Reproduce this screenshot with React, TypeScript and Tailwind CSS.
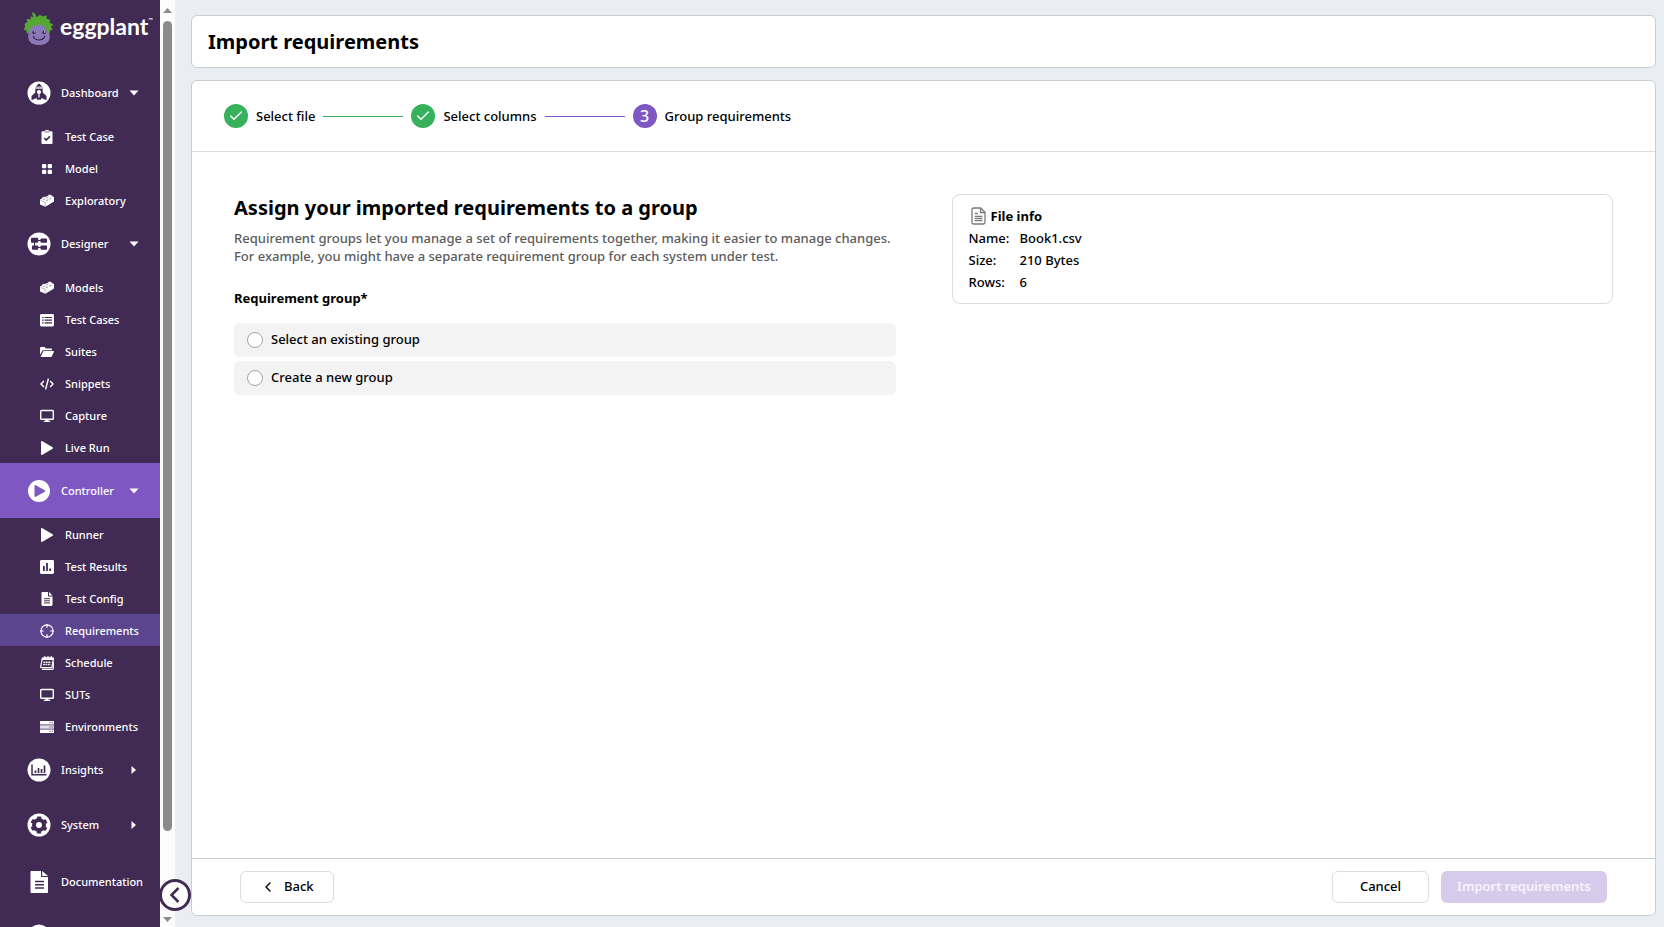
import React, { useState } from 'react';
import { Check, ChevronLeft } from 'lucide-react';

/* ---------- 14px icons of the sub menu ---------- */

const ClipboardIcon = () => (
  <svg width="14" height="14" viewBox="0 0 14 14">
    <path fill="#fff" d="M2.6 1.2H4.9V.9c0-.5.4-.9.9-.9h2.4c.5 0 .9.4.9.9v.3h2.3c.6 0 1.1.5 1.1 1.1v10.6c0 .6-.5 1.1-1.1 1.1H2.6c-.6 0-1.1-.5-1.1-1.1V2.3c0-.6.5-1.1 1.1-1.1z" />
    <path d="M4.9 1.9h4.2" stroke="#412b54" strokeWidth=".7" />
    <path d="M4.2 8l2 2 3.7-3.7" fill="none" stroke="#412b54" strokeWidth="1.7" />
  </svg>
);

const GridIcon = () => (
  <svg width="14" height="14" viewBox="0 0 14 14" fill="#fff">
    <rect x="2" y="2" width="4.3" height="4.3" rx="1" />
    <rect x="7.7" y="2" width="4.3" height="4.3" rx="1" />
    <rect x="2" y="7.7" width="4.3" height="4.3" rx="1" />
    <rect x="7.7" y="7.7" width="4.3" height="4.3" rx="1" />
  </svg>
);

const BrickIcon = () => (
  <svg width="14" height="14" viewBox="0 0 14 14">
    <path fill="#fff" d="M0 5.4l2-1 .2-.9 2-.8 1 .2 2.800-1.200.4-.6 1.800-.5L14 3.200v4.400L5.400 12.800 0 10.400z" />
    <path d="M.6 6.300l4.600 2v3.900" fill="none" stroke="#412b54" strokeWidth=".5" opacity=".7" />
    <path d="M3 5.700l2.200-1M6.400 4.100l2.200-1M6 6.700l2.200-1M9.400 5.100l2.200-1" stroke="#412b54" strokeWidth=".6" opacity=".8" />
  </svg>
);

const ListIcon = () => (
  <svg width="14" height="14" viewBox="0 0 14 14">
    <rect y="1" width="14" height="12.4" rx="1.4" fill="#fff" />
    <path d="M2 4.5h1.6M2 7.2h1.6M2 9.9h1.6M4.6 4.5H12M4.6 7.2H12M4.6 9.9H12" stroke="#412b54" strokeWidth="1.2" />
  </svg>
);

const FolderIcon = () => (
  <svg width="14" height="14" viewBox="0 0 14 14" fill="#fff">
    <path d="M0 9.8V3.2C0 2.5.5 2 1.2 2h3.4L6 3.4h4.8c.7 0 1.2.5 1.2 1.2v.7H3.7c-.7 0-1.3.4-1.6 1z" />
    <path d="M.6 12l2.4-5.2c.2-.5.6-.7 1.1-.7h9.4c.4 0 .6.4.4.8l-2.2 4.5c-.2.4-.6.6-1 .6z" />
  </svg>
);

const CodeIcon = () => (
  <svg width="14" height="14" viewBox="0 0 14 14" fill="none" stroke="#fff" strokeWidth="1.5">
    <path d="M3.9 4L1 7l2.9 3M10.1 4L13 7l-2.9 3M8.4 1.6L5.6 12.4" />
  </svg>
);

const MonitorIcon = () => (
  <svg width="14" height="14" viewBox="0 0 14 14">
    <rect x=".7" y="1.5" width="12.6" height="8.8" rx=".8" fill="none" stroke="#fff" strokeWidth="1.4" />
    <path d="M5.6 10.5h2.8v1.3h1.8V13H3.8v-1.2h1.8z" fill="#fff" />
  </svg>
);

const PlayIcon = () => (
  <svg width="14" height="14" viewBox="0 0 14 14">
    <path d="M1 .8c0-.6.5-.9 1-.7l10.6 6.2c.5.3.5 1.1 0 1.4L2 13.9c-.5.2-1-.1-1-.7z" fill="#fff" />
  </svg>
);

const BarsIcon = () => (
  <svg width="14" height="14" viewBox="0 0 14 14">
    <rect width="14" height="14" rx="1.4" fill="#fff" />
    <path d="M3 6h1.8v5H3zM6.1 3h1.8v8H6.1zM9.2 8.5H11V11H9.2z" fill="#412b54" />
  </svg>
);

const DocIcon = () => (
  <svg width="14" height="14" viewBox="0 0 14 14">
    <path d="M2.5 0H8v4.5h4.5v8.3c0 .7-.5 1.2-1.2 1.2H2.7c-.7 0-1.2-.5-1.2-1.2V1c0-.6.4-1 1-1z" fill="#fff" />
    <path d="M9 0l3.5 3.5H9z" fill="#fff" />
    <path d="M4 6.700h6M4 8.800h6M4 10.900h6" stroke="#412b54" strokeWidth="1" />
  </svg>
);

const TargetIcon = () => (
  <svg width="14" height="14" viewBox="0 0 14 14" fill="none" stroke="#fff">
    <circle cx="7" cy="7" r="6.1" strokeWidth="1.2" />
    <path d="M7 0v3.800M7 10.200V14M0 7h3.800M10.200 7H14" strokeWidth="1.200" />
  </svg>
);

const CalendarIcon = () => (
  <svg width="14" height="14" viewBox="0 0 14 14">
    <path d="M3.200 1.800h9.400c.5 0 .8.4.8.8L12 10.800c-.1.500-.5.800-1 .8H1.400c-.5 0-.8-.4-.7-.9l1.500-8.100c.1-.5.5-.8 1-.8z" fill="none" stroke="#fff" strokeWidth="1.200" />
    <path d="M2.300 2h11l-.4 2h-11z" fill="#fff" />
    <path d="M4.800 0v2.500M8 0v2.500M11.200 0v2.500" stroke="#fff" strokeWidth="1.200" />
    <path d="M3.500 6.300h7.600M3.100 8.600h7.600" stroke="#fff" strokeWidth="1.500" strokeDasharray="1.700 .7" />
    <path d="M2 13.300h10.200c.6 0 1.100-.5 1.100-1.100V6" fill="none" stroke="#fff" strokeWidth="1.200" />
  </svg>
);

const ServerIcon = () => (
  <svg width="14" height="14" viewBox="0 0 14 14">
    <rect y="1" width="14" height="3.4" rx=".5" fill="#fff" />
    <rect y="5.3" width="14" height="3.4" rx=".5" fill="#fff" opacity=".85" />
    <rect y="9.6" width="14" height="3.4" rx=".5" fill="#fff" />
    <path d="M9.500 2.700h1M11.800 2.700h1M9.500 7h1M11.800 7h1M9.500 11.300h1M11.800 11.300h1" stroke="#412b54" strokeWidth="1" />
  </svg>
);

/* ---------- round icons of the sections ---------- */

const RocketBadge = () => (
  <svg width="24" height="24" viewBox="0 0 24 24">
    <circle cx="12" cy="12" r="11.5" fill="#fff" />
    <path d="M12 2.500c2.300 1.600 3.600 3.600 3.700 6.200v2.800l3.800 3.600v4.200l-3.800-1.900H14v1.400h-4v-1.400H8.300l-3.800 1.900v-4.200l3.800-3.600V8.700c.1-2.600 1.400-4.600 3.700-6.200z" fill="#412b54" />
    <path d="M9.200 5.600h5.600L15.700 8H8.300z" fill="#bdb3c6" />
    <circle cx="12" cy="11" r="2.100" fill="#fff" />
    <path d="M12 12.500v4" stroke="#fff" strokeWidth="1.200" />
  </svg>
);

const DesignerBadge = () => (
  <svg width="24" height="24" viewBox="0 0 24 24">
    <circle cx="12" cy="12" r="11.5" fill="#fff" />
    <path d="M10 8.500h5M10 15.500h5M7.500 10v5" stroke="#412b54" strokeWidth="1.200" />
    <rect x="4" y="5.800" width="7.200" height="5" rx=".7" fill="#412b54" />
    <rect x="13.500" y="6.500" width="6.500" height="4.200" rx=".7" fill="#412b54" />
    <rect x="5" y="13.600" width="6.200" height="4.200" rx=".7" fill="#412b54" />
    <rect x="13.500" y="13.600" width="6.500" height="4.200" rx=".7" fill="#412b54" />
  </svg>
);

const ControllerBadge = () => (
  <svg width="24" height="24" viewBox="0 0 24 24">
    <circle cx="12" cy="12" r="11" fill="#fff" />
    <path d="M7.500 7c0-.7.700-1.100 1.300-.8l9 5.100c.5.300.5 1.100 0 1.400l-9 5.100c-.6.300-1.300-.1-1.300-.8z" fill="#7e57c2" />
  </svg>
);

const InsightsBadge = () => (
  <svg width="24" height="24" viewBox="0 0 24 24">
    <circle cx="12" cy="12" r="11.5" fill="#fff" />
    <path d="M5 6.500v10.200h14.500" fill="none" stroke="#412b54" strokeWidth="1.500" />
    <path d="M8.500 15v-2.500M11.500 15v-5M14.500 15v-4M17.500 15V7.500" stroke="#412b54" strokeWidth="1.700" />
  </svg>
);

const SystemBadge = () => (
  <svg width="24" height="24" viewBox="0 0 24 24">
    <circle cx="12" cy="12" r="11.5" fill="#fff" />
    <circle cx="12" cy="12" r="5" fill="none" stroke="#412b54" strokeWidth="4" />
    <circle cx="12" cy="12" r="7.300" fill="none" stroke="#412b54" strokeWidth="2.600" strokeDasharray="4 3.645" strokeDashoffset="2" transform="rotate(30 12 12)" />
  </svg>
);

const DocumentationIcon = () => (
  <svg width="24" height="24" viewBox="0 0 24 24">
    <path d="M4.500 1h9.500v6h7v15c0 .6-.4 1-1 1H4.500c-.6 0-1-.4-1-1V2c0-.6.4-1 1-1z" fill="#fff" />
    <path d="M15.200 1L21 6h-5.800z" fill="#fff" />
    <path d="M8 11.500h9M8 14.700h9M8 17.900h9" stroke="#412b54" strokeWidth="1.500" />
  </svg>
);

const PlainBadge = () => (
  <svg width="24" height="24" viewBox="0 0 24 24">
    <circle cx="12" cy="12" r="11.5" fill="#fff" />
  </svg>
);

const LogoMark = () => (
  <svg width="30" height="34" viewBox="0 0 30 34" className="shrink-0">
    <path d="M15 9c6.500 0 9.500 4 9.900 9 .2 3 1.100 5 .9 7.500-.5 5-4.700 7.500-10.800 7.500S4.700 30.500 4.200 25.500C4 23 4.900 21 5.100 18 5.500 13 8.500 9 15 9z" fill="#8b78b9" />
    <path d="M9.500 5.200L8 1.500 8.800 0l2.400 1.700 1.300 3.600 3.500-2.600 2.600 1.800 4.200-1.300-.3 3.600 3.900 1.200-1 2.700 3.900 1.800-2.300 2.200 1.500 3-2.500.9-.5 2.600-2.200-.4-2.100-6.300-3-.7-2.400-1.500-2.600 1.600-2.400-1.200-1.800 2-2.500.8-1.100 5.500-2.400.4-.8-2.800-2.500-1 1.500-2.600L.5 12l2.800-2-.8-3 4.400.2-.3-3z" fill="#56a632" />
    <circle cx="10" cy="20.500" r="1.700" fill="#35244a" />
    <circle cx="20" cy="20.500" r="1.700" fill="#35244a" />
    <circle cx="10.500" cy="19.900" r=".6" fill="#fff" />
    <circle cx="20.500" cy="19.900" r=".6" fill="#fff" />
    <path d="M9.300 24.500c1.300 2.500 3.300 3.500 5.700 3.500s4.500-1 5.700-3.500" fill="none" stroke="#35244a" strokeWidth="1.200" strokeLinecap="round" />
  </svg>
);

const FileIcon = () => (
  <svg width="16" height="18" viewBox="0 0 16 18" fill="none" stroke="#7a7a7a" strokeWidth="1.300">
    <path d="M2.700 1h7L14 5.300v10c0 .9-.7 1.700-1.700 1.700H2.700C1.800 17 1 16.200 1 15.300V2.700C1 1.800 1.800 1 2.700 1z" />
    <path d="M9.500 1v4.500H14M3.800 6.500h3M3.800 9.300h7.600M3.800 11.500h7.600M3.800 13.700h7.600" />
  </svg>
);

interface SubItem {
  label: string;
  icon: React.ComponentType;
  active?: boolean;
}

interface Section {
  label: string;
  icon: React.ComponentType;
  arrow?: 'down' | 'right';
  active?: boolean;
  tall?: boolean;
  items?: SubItem[];
}

const sections: Section[] = [
  {
    label: 'Dashboard',
    icon: RocketBadge,
    arrow: 'down',
    items: [
      { label: 'Test Case', icon: ClipboardIcon },
      { label: 'Model', icon: GridIcon },
      { label: 'Exploratory', icon: BrickIcon },
    ],
  },
  {
    label: 'Designer',
    icon: DesignerBadge,
    arrow: 'down',
    items: [
      { label: 'Models', icon: BrickIcon },
      { label: 'Test Cases', icon: ListIcon },
      { label: 'Suites', icon: FolderIcon },
      { label: 'Snippets', icon: CodeIcon },
      { label: 'Capture', icon: MonitorIcon },
      { label: 'Live Run', icon: PlayIcon },
    ],
  },
  {
    label: 'Controller',
    icon: ControllerBadge,
    arrow: 'down',
    active: true,
    items: [
      { label: 'Runner', icon: PlayIcon },
      { label: 'Test Results', icon: BarsIcon },
      { label: 'Test Config', icon: DocIcon },
      { label: 'Requirements', icon: TargetIcon, active: true },
      { label: 'Schedule', icon: CalendarIcon },
      { label: 'SUTs', icon: MonitorIcon },
      { label: 'Environments', icon: ServerIcon },
    ],
  },
  { label: 'Insights', icon: InsightsBadge, arrow: 'right' },
  { label: 'System', icon: SystemBadge, arrow: 'right' },
  { label: 'Documentation', icon: DocumentationIcon, tall: true },
];

const fileInfo = [
  { label: 'Name:', value: 'Book1.csv' },
  { label: 'Size:', value: '210 Bytes' },
  { label: 'Rows:', value: '6' },
];

function Arrow({ dir }: { dir: 'down' | 'right' }) {
  return (
    <svg width="10" height="10" viewBox="0 0 10 10" className="shrink-0">
      <path d={dir === 'down' ? 'M.5 2.5h9L5 7.5z' : 'M2.5 1v8L7 5z'} fill="#fff" />
    </svg>
  );
}

function Sidebar() {
  return (
    <nav className="w-40 shrink-0 overflow-hidden bg-[#412b54] text-[11px] font-medium text-white">
      <a href="#" className="flex h-[65px] items-start pt-3 pl-6">
        <LogoMark />
        <span className="ml-1.5 flex items-start font-[Lato,sans-serif] text-[23px] leading-7 font-bold">
          eggplant<span className="text-[6px] leading-4">™</span>
        </span>
      </a>
      {sections.map((s) => (
        <div key={s.label}>
          <button
            className={`flex w-full items-center pl-[27px] text-left ${s.tall ? 'h-[60px]' : 'h-[55px]'} ${
              s.active ? 'bg-[#7e57c2]' : ''
            }`}
          >
            <s.icon />
            <span className="ml-2.5 w-[68px] pt-px whitespace-nowrap">{s.label}</span>
            {s.arrow && <Arrow dir={s.arrow} />}
          </button>
          {s.items?.map((item) => (
            <a
              key={item.label}
              href="#"
              className={`flex h-8 items-center gap-[11px] pt-0.5 pl-10 ${item.active ? 'bg-[#5b458f]' : ''}`}
            >
              <item.icon />
              {item.label}
            </a>
          ))}
        </div>
      ))}
      <div className="pt-3 pl-[27px]">
        <PlainBadge />
      </div>
    </nav>
  );
}

function ScrollTrack() {
  return (
    <div className="relative flex w-[15px] shrink-0 flex-col items-center bg-[#fcfcfc]">
      <svg width="9" height="21" viewBox="0 0 9 21">
        <path d="M0 13l4.500-5L9 13z" fill="#8b8b8b" />
      </svg>
      <div className="w-[9px] grow-[10] rounded-full bg-[#8b8b8b]" />
      <div className="grow" />
      <svg width="9" height="15" viewBox="0 0 9 15">
        <path d="M0 5h9l-4.500 5z" fill="#8b8b8b" />
      </svg>
      <button
        aria-label="Collapse menu"
        className="absolute bottom-4 left-[-1px] flex size-8 items-center justify-center rounded-full border-3 border-[#412b54] bg-white text-[#412b54]"
      >
        <svg width="12" height="16" viewBox="0 0 12 16" fill="none" stroke="currentColor" strokeWidth="2.500">
          <path d="M9.500 1L2.500 8l7 7" />
        </svg>
      </button>
    </div>
  );
}

function Stepper() {
  return (
    <ol className="flex h-[71px] items-center gap-2 border-b border-[#dcdcdf] px-8 text-[13px] font-medium">
      <li className="flex items-center gap-2">
        <span className="flex size-6 items-center justify-center rounded-full bg-[#38b15c] text-white">
          <Check size={16} />
        </span>
        <span className="pt-px">Select file</span>
      </li>
      <li aria-hidden="true" className="mt-px h-px w-20 bg-[#38b15c]" />
      <li className="flex items-center gap-2">
        <span className="flex size-6 items-center justify-center rounded-full bg-[#38b15c] text-white">
          <Check size={16} />
        </span>
        <span className="pt-px">Select columns</span>
      </li>
      <li aria-hidden="true" className="mt-px h-px w-20 bg-[#7e57c2]" />
      <li className="flex items-center gap-2">
        <span className="flex size-6 items-center justify-center rounded-full bg-[#7e57c2] text-base text-white">3</span>
        <span className="pt-px">Group requirements</span>
      </li>
    </ol>
  );
}

export default function App() {
  const [group, setGroup] = useState('');

  const options = [
    { value: 'existing', label: 'Select an existing group' },
    { value: 'new', label: 'Create a new group' },
  ];

  return (
    <div className="flex h-screen overflow-hidden bg-[#eaedf2] font-['Noto_Sans',sans-serif] text-black">
      <Sidebar />
      <ScrollTrack />

      <main className="flex min-w-0 grow flex-col gap-3 pt-[15px] pr-2 pb-[11px] pl-4">
        <header className="flex h-[53px] shrink-0 items-center rounded-md border border-[#cbcbd2] bg-white px-4">
          <h1 className="text-xl font-bold">Import requirements</h1>
        </header>

        <section className="flex min-h-0 grow flex-col rounded-md border border-[#cbcbd2] bg-white">
          <Stepper />

          <div className="grid grow grid-cols-2 content-start items-start gap-14 px-[42px] pt-[42px]">
            <div>
              <h2 className="text-xl leading-7 font-bold">Assign your imported requirements to a group</h2>
              <p className="mt-[7px] text-[13px] leading-[18px] font-medium text-[#5c5c5c]">
                Requirement groups let you manage a set of requirements together, making it easier to manage changes.
                For example, you might have a separate requirement group for each system under test.
              </p>
              <fieldset className="mt-6 text-[13px]">
                <legend className="leading-[18px] font-bold">Requirement group*</legend>
                <div className="mt-4 flex flex-col gap-1">
                  {options.map((o) => (
                    <label key={o.value} className="flex h-[34px] items-center gap-2 rounded-md bg-[#f3f3f3] px-[13px] font-medium">
                      <input
                        type="radio"
                        name="group"
                        value={o.value}
                        checked={group === o.value}
                        onChange={() => setGroup(o.value)}
                        className="size-4 appearance-none rounded-full border border-[#a3a3a3] bg-white checked:border-4 checked:border-[#7e57c2]"
                      />
                      {o.label}
                    </label>
                  ))}
                </div>
              </fieldset>
            </div>

            <div className="rounded-lg border border-[#dcdcdf] px-4 py-[10px] text-[13px] leading-[22px] font-medium">
              <h3 className="flex items-center gap-1 pl-0.5 font-bold">
                <FileIcon />
                File info
              </h3>
              <dl className="grid grid-cols-[51px_1fr]">
                {fileInfo.map((row) => (
                  <React.Fragment key={row.label}>
                    <dt>{row.label}</dt>
                    <dd>{row.value}</dd>
                  </React.Fragment>
                ))}
              </dl>
            </div>
          </div>

          <footer className="flex h-[57px] shrink-0 items-center gap-3 border-t border-[#cbcbd2] px-12 text-[13px]">
            <button className="mr-auto flex h-8 items-center gap-2 rounded-md border border-[#dcdcdf] px-[19px] font-medium">
              <ChevronLeft size={16} />
              Back
            </button>
            <button className="h-8 rounded-md border border-[#dcdcdf] px-[27px] font-medium">Cancel</button>
            <button disabled className="h-8 rounded-md bg-[#d7cbeb] px-4 font-semibold text-white/80">
              Import requirements
            </button>
          </footer>
        </section>
      </main>
    </div>
  );
}
